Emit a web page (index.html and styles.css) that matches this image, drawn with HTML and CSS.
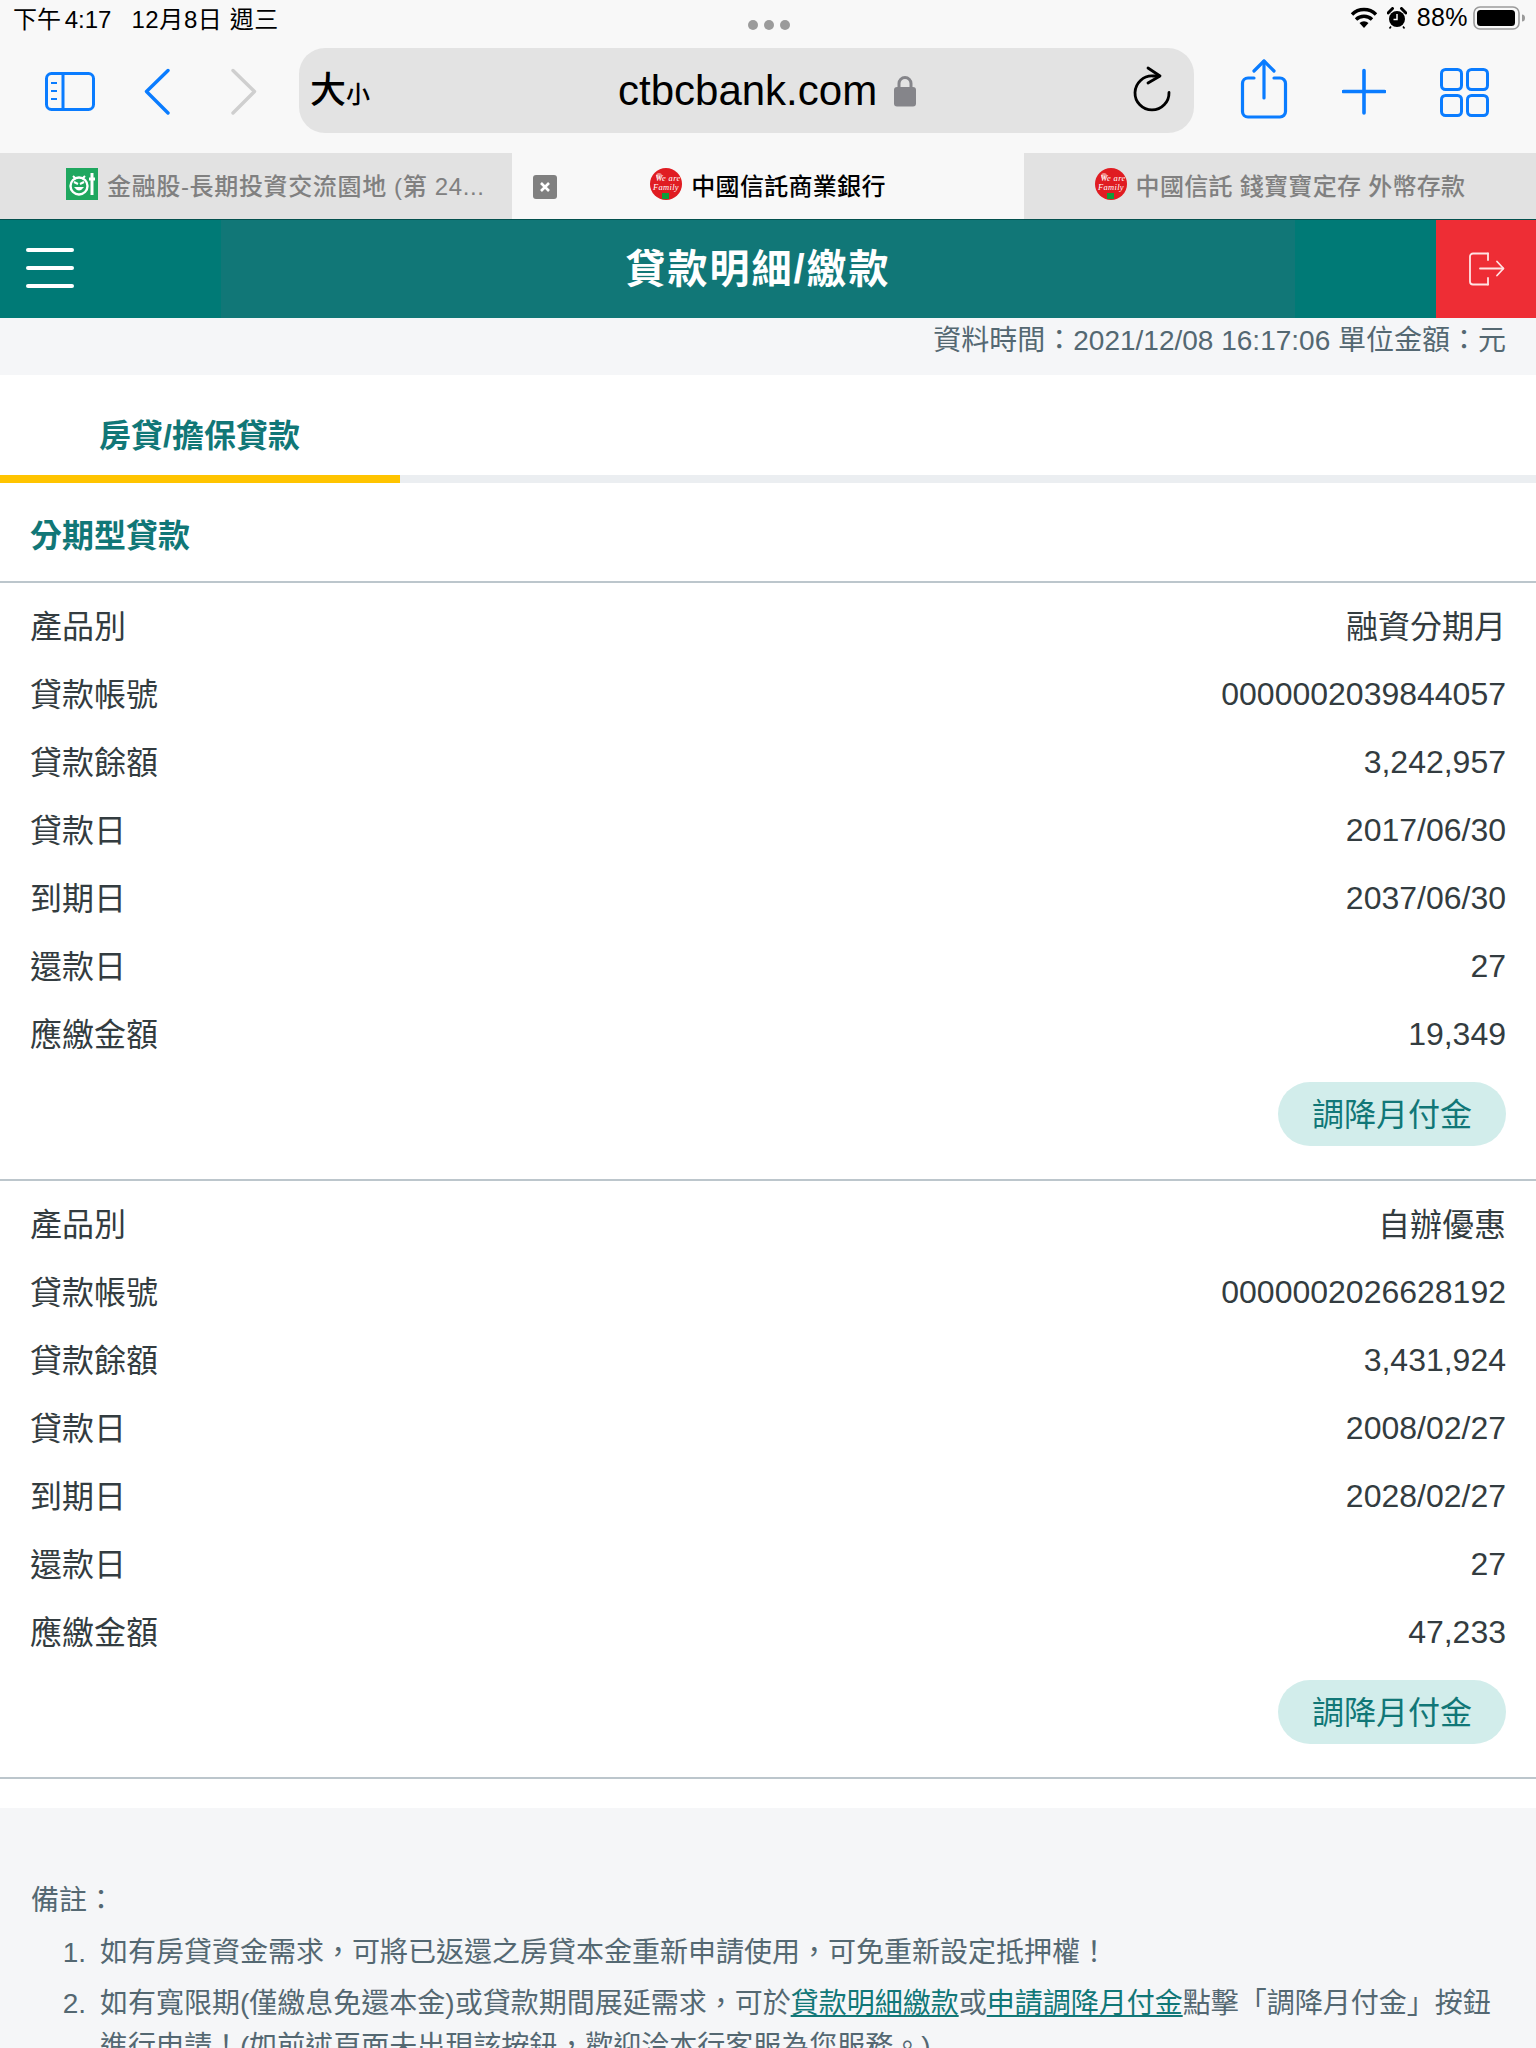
FILE: index.html
```html
<!DOCTYPE html>
<html lang="zh-Hant">
<head>
<meta charset="utf-8">
<title>貸款明細/繳款</title>
<link rel="stylesheet" href="styles.css">
</head>
<body>
<div class="status">
  <div class="status-left"><span class="clock">下午 4:17</span><span class="date">12月8日 週三</span></div>
  <div class="dots"><i></i><i></i><i></i></div>
  <div class="status-right">
    <svg class="wifi" width="28" height="22" viewBox="0 0 28 22"><path d="M14 21 L9.5 16 A7 7 0 0 1 18.5 16Z" fill="#000"/><path d="M6 12.5 A11.5 11.5 0 0 1 22 12.5" fill="none" stroke="#000" stroke-width="3.4"/><path d="M2 7.5 A17 17 0 0 1 26 7.5" fill="none" stroke="#000" stroke-width="3.4"/></svg>
    <svg class="alarm" width="20" height="22" viewBox="0 0 20 22"><circle cx="10" cy="12" r="8" fill="#000"/><path d="M10 7V12.5H6.5" fill="none" stroke="#f8f8f8" stroke-width="1.5"/><path d="M1 6 L5.5 1.5 M19 6 L14.5 1.5" stroke="#000" stroke-width="3" stroke-linecap="round"/><path d="M4 19.5 L2.5 21.5 M16 19.5 L17.5 21.5" stroke="#000" stroke-width="1.6"/></svg>
    <span class="pct">88%</span>
    <svg class="battery" width="52" height="24" viewBox="0 0 52 24"><rect x="1" y="1" width="45" height="22" rx="6" fill="none" stroke="#9a9a9a" stroke-width="1.6"/><rect x="4" y="4" width="38" height="16" rx="3.5" fill="#000"/><path d="M49 8.5 a3 3.5 0 0 1 0 7z" fill="#9a9a9a"/></svg>
  </div>
</div>

<div class="toolbar">
  <svg class="ic-sidebar" width="50" height="65" viewBox="0 0 50 65" fill="none" stroke="#0a7cff" stroke-width="3"><rect x="1.5" y="15.5" width="47" height="36" rx="5"/><path d="M18 15.5V51.5"/><path d="M6 25H12M6 33H12M6 41H12" stroke-width="2"/></svg>
  <svg class="ic-back" width="26" height="65" viewBox="0 0 26 65" fill="none" stroke="#0a7cff" stroke-width="3.4" stroke-linecap="round" stroke-linejoin="round"><path d="M24 12.5 L2.5 33.5 L24 55"/></svg>
  <svg class="ic-fwd" width="26" height="65" viewBox="0 0 26 65" fill="none" stroke="#cfcfcf" stroke-width="3.4" stroke-linecap="round" stroke-linejoin="round"><path d="M2 12.5 L23.5 33.5 L2 55"/></svg>
  <div class="address">
    <span class="size"><b>大</b><small>小</small></span>
    <span class="url">ctbcbank.com</span>
    <svg class="lock" width="22" height="33" viewBox="0 0 22 33"><path d="M5 15V9.5a6 6 0 0 1 12 0V15" fill="none" stroke="#85858a" stroke-width="3"/><rect x="0" y="13" width="22" height="19.5" rx="3" fill="#85858a"/></svg>
    <svg class="reload" width="38" height="65" viewBox="0 0 38 65" fill="none" stroke="#000" stroke-width="2.8" stroke-linecap="round" stroke-linejoin="round"><path d="M26 18H20A17 17 0 1 0 36 34.500"/><path d="M15 10L27 18L15 25"/></svg>
  </div>
  <svg class="ic-share" width="48" height="65" viewBox="0 0 48 65" fill="none" stroke="#0a7cff" stroke-width="3.2" stroke-linecap="round" stroke-linejoin="round"><path d="M14 20H8a5.500 5.500 0 0 0-5.500 5.500V53.500A5.500 5.500 0 0 0 8 59H40a5.500 5.500 0 0 0 5.500-5.500V25.500A5.500 5.500 0 0 0 40 20H34"/><path d="M24 3V40"/><path d="M14 13L24 3L34 13"/></svg>
  <svg class="ic-plus" width="44" height="65" viewBox="0 0 44 65" fill="none" stroke="#0a7cff" stroke-width="3.6" stroke-linecap="round"><path d="M1.500 33.500H42.500M22 12.500V55"/></svg>
  <svg class="ic-grid" width="49" height="65" viewBox="0 0 49 65" fill="none" stroke="#0a7cff" stroke-width="3"><rect x="1.500" y="11.500" width="20" height="20" rx="4"/><rect x="27.500" y="11.500" width="20" height="20" rx="4"/><rect x="1.500" y="37.500" width="20" height="20" rx="4"/><rect x="27.500" y="37.500" width="20" height="20" rx="4"/></svg>
</div>

<div class="tabs">
  <div class="tab tab-first">
    <svg width="32" height="32" viewBox="0 0 32 32"><rect width="32" height="32" fill="#1fa75f"/><circle cx="13" cy="18" r="8.500" fill="none" stroke="#fff" stroke-width="2.400"/><path d="M7 8 L10 11 M19 8 L16 11" stroke="#fff" stroke-width="2"/><path d="M8 19 Q13 26 18 19Z" fill="#fff"/><path d="M8 14 L12 16 M18 14 L14 16" stroke="#fff" stroke-width="2"/><path d="M26 5V27" stroke="#fff" stroke-width="3"/><path d="M23 11H29" stroke="#fff" stroke-width="3"/></svg>
    <span>金融股-長期投資交流園地 (第 24...</span>
  </div>
  <div class="tab tab-active">
    <svg class="close" width="24" height="24" viewBox="0 0 24 24"><rect width="24" height="24" rx="3" fill="#808080"/><path d="M8 8L16 16M16 8L8 16" stroke="#fff" stroke-width="2.600"/></svg>
    <svg width="32" height="32" viewBox="0 0 32 32"><circle cx="16" cy="16" r="16" fill="#e01c22"/><circle cx="9" cy="8" r="3" fill="#f08a8a"/><text class="fav-text" x="18" y="13">We are</text><text class="fav-text" x="16" y="22">Family</text><rect x="12" y="25" width="7" height="6" fill="#0f9d3a"/></svg>
    <span>中國信託商業銀行</span>
  </div>
  <div class="tab">
    <svg width="32" height="32" viewBox="0 0 32 32"><circle cx="16" cy="16" r="16" fill="#e01c22"/><circle cx="9" cy="8" r="3" fill="#f08a8a"/><text class="fav-text" x="18" y="13">We are</text><text class="fav-text" x="16" y="22">Family</text><rect x="12" y="25" width="7" height="6" fill="#0f9d3a"/></svg>
    <span>中國信託 錢寶寶定存 外幣存款</span>
  </div>
</div>

<header class="header">
  <div class="menu"><i></i><i></i><i></i></div>
  <h1>貸款明細/繳款</h1>
  <div class="spacer"></div>
  <div class="logout">
    <svg width="36" height="34" viewBox="0 0 36 34" fill="none" stroke="#ffe3e3" stroke-width="1.800" stroke-linecap="round" stroke-linejoin="round"><path d="M19 1.500H4a3 3 0 0 0-3 3V29.500a3 3 0 0 0 3 3H19"/><path d="M19 1.500V8M19 26V32.500"/><path d="M11 16.500H34"/><path d="M28 9.500L34.500 16.500L28 23.500"/></svg>
  </div>
</header>

<div class="meta">資料時間：2021/12/08 16:17:06 單位金額：元</div>

<nav class="loan-tabs"><div class="loan-tab">房貸/擔保貸款</div></nav>

<h2 class="section-title">分期型貸款</h2>

<section class="loan">
  <div class="row"><span>產品別</span><span>融資分期月</span></div>
  <div class="row"><span>貸款帳號</span><span class="num">0000002039844057</span></div>
  <div class="row"><span>貸款餘額</span><span class="num">3,242,957</span></div>
  <div class="row"><span>貸款日</span><span class="num">2017/06/30</span></div>
  <div class="row"><span>到期日</span><span class="num">2037/06/30</span></div>
  <div class="row"><span>還款日</span><span class="num">27</span></div>
  <div class="row"><span>應繳金額</span><span class="num">19,349</span></div>
  <div class="actions"><a class="pill">調降月付金</a></div>
</section>

<section class="loan">
  <div class="row"><span>產品別</span><span>自辦優惠</span></div>
  <div class="row"><span>貸款帳號</span><span class="num">0000002026628192</span></div>
  <div class="row"><span>貸款餘額</span><span class="num">3,431,924</span></div>
  <div class="row"><span>貸款日</span><span class="num">2008/02/27</span></div>
  <div class="row"><span>到期日</span><span class="num">2028/02/27</span></div>
  <div class="row"><span>還款日</span><span class="num">27</span></div>
  <div class="row"><span>應繳金額</span><span class="num">47,233</span></div>
  <div class="actions"><a class="pill">調降月付金</a></div>
</section>
<div class="loan-end"></div>

<footer class="notes">
  <p>備註：</p>
  <ol>
    <li>如有房貸資金需求，可將已返還之房貸本金重新申請使用，可免重新設定抵押權！</li>
    <li>如有寬限期(僅繳息免還本金)或貸款期間展延需求，可於<a>貸款明細繳款</a>或<a>申請調降月付金</a>點擊「調降月付金」按鈕進行申請！(如前述頁面未出現該按鈕，歡迎洽本行客服為您服務。)</li>
  </ol>
</footer>
</body>
</html>
```

FILE: styles.css
```css
* { box-sizing: border-box; }
html, body { margin: 0; padding: 0; height: 2048px; overflow: hidden; }
body {
  font-family: "Liberation Sans", "Noto Sans CJK TC", sans-serif;
  background: #fff;
  color: #333c40;
}
svg { display: block; flex: none; }

.status {
  height: 40px;
  background: #f8f8f8;
  display: flex;
  align-items: center;
  padding: 0 11px 5px 13px;
  color: #000;
  font-size: 24px;
}
.status-left { flex: 1; display: flex; gap: 20px; }
.clock { word-spacing: -3px; }
.date { letter-spacing: 0.6px; }
.status-right { flex: 1; display: flex; justify-content: flex-end; align-items: center; }
.dots { display: flex; gap: 6px; margin-top: 15px; }
.dots i { width: 10px; height: 10px; border-radius: 50%; background: #9b9b9b; }
.wifi { margin-right: 9px; }
.alarm { margin-right: 10px; }
.pct { margin-right: 5px; font-size: 25px; letter-spacing: 0.4px; }

.toolbar {
  height: 113px;
  padding: 8px 0 20px;
  background: #f8f8f8;
  display: flex;
  align-items: center;
}
.ic-sidebar { margin-left: 45px; }
.ic-back { margin-left: 49px; }
.ic-fwd { margin-left: 61px; }
.address {
  margin-left: 42px;
  width: 895px;
  height: 85px;
  border-radius: 26px;
  background: #e3e3e3;
  display: flex;
  align-items: center;
  padding: 0 23px 0 11px;
  color: #000;
}
.size { width: 60px; line-height: 1; display: flex; align-items: baseline; font-weight: 500; }
.size b { font-size: 36px; font-weight: 500; }
.size small { font-size: 24px; }
.url { margin-left: 248px; font-size: 42px; line-height: 50px; }
.lock { margin-left: 17px; }
.reload { margin-left: auto; }
.ic-share { margin-left: 46px; }
.ic-plus { margin-left: 54px; }
.ic-grid { margin-left: 54px; }

.tabs {
  height: 66px;
  display: grid;
  grid-template-columns: repeat(3, 512px);
}
.tab {
  position: relative;
  background: #e2e2e2;
  color: #808080;
  display: flex;
  align-items: center;
  justify-content: center;
  gap: 9px;
  font-size: 24px;
  font-weight: 500;
  letter-spacing: 0.3px;
  white-space: nowrap;
  padding-bottom: 4px;
}
.tab-first { justify-content: flex-start; padding-left: 66px; letter-spacing: 0.65px; }
.tab-active { background: #f8f8f8; color: #000; }
.close { position: absolute; left: 21px; top: 22px; }
.fav-text { font-family: "Liberation Serif", serif; font-style: italic; font-size: 8.500px; fill: #fff; text-anchor: middle; }

.header {
  height: 99px;
  border-top: 1px solid #04504e;
  display: grid;
  grid-template-columns: 221px 1074px 141px 100px;
  background: #007a76;
}
.menu { display: flex; flex-direction: column; gap: 14px; padding: 28px 0 0 26px; }
.menu i { width: 48px; height: 4px; border-radius: 2px; background: #fff; }
.header h1 {
  margin: 0;
  background: #117777;
  color: #fff;
  font-size: 40px;
  font-weight: 700;
  letter-spacing: 2px;
  text-align: center;
  line-height: 98px;
}
.logout { background: #ee2d35; display: flex; align-items: center; justify-content: center; padding-left: 2px; }

.meta {
  height: 57px;
  background: #f5f6f8;
  color: #546872;
  font-size: 28px;
  line-height: 46px;
  text-align: right;
  padding-right: 30px;
}

.loan-tabs { height: 108px; border-bottom: 8px solid #ebeef1; }
.loan-tab {
  width: 400px;
  height: 108px;
  padding: 39px 0 0 99px;
  border-bottom: 8px solid #ffc400;
  color: #117777;
  font-size: 32px;
  font-weight: 700;
  line-height: 44px;
}
.section-title {
  margin: 0;
  height: 98px;
  padding: 31px 0 0 30px;
  color: #117777;
  font-size: 32px;
  font-weight: 700;
  line-height: 44px;
}
.loan { border-top: 2px solid #bcc6cc; padding: 8px 30px 33px 30px; }
.row {
  height: 68px;
  display: flex;
  justify-content: space-between;
  align-items: center;
  font-size: 32px;
}
.row span { padding-bottom: 3px; }
.row .num { padding: 2px 0 0; }
.actions { margin-top: 15px; display: flex; justify-content: flex-end; }
.pill {
  height: 64px;
  width: 228px;
  border-radius: 32px;
  background: #d2edeb;
  color: #117777;
  font-size: 32px;
  padding-bottom: 4px;
  display: flex;
  align-items: center;
  justify-content: center;
}
.loan-end { border-top: 2px solid #bcc6cc; height: 31px; }

.notes {
  background: #f5f6f8;
  color: #546872;
  font-size: 28px;
  line-height: 43px;
  padding: 71px 30px 0 31px;
}
.notes p { margin: 0; }
.notes ol { margin: 9px 0 0; padding: 0 0 0 69px; }
.notes li { margin-bottom: 8px; }
.notes li::marker { content: counter(list-item) ".\2002"; }
.notes a { color: #117777; text-decoration: underline; }
```
